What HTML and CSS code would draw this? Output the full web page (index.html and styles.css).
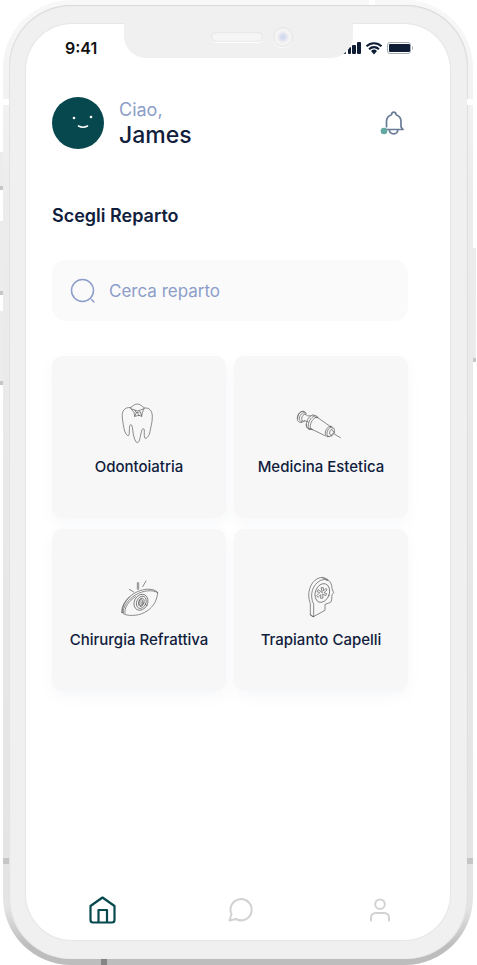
FILE: index.html
```html
<!DOCTYPE html>
<html lang="it">
<head>
<meta charset="utf-8">
<meta name="viewport" content="width=device-width, initial-scale=1">
<title>Scegli Reparto</title>
<link rel="stylesheet" href="styles.css">
</head>
<body>
<div class="phone">
  <span class="key key-mute"></span>
  <span class="key key-up"></span>
  <span class="key key-down"></span>
  <span class="key key-power"></span>
  <span class="band band-left-top"></span>
  <span class="band band-right-top"></span>
  <span class="band band-left-bottom"></span>
  <span class="band band-right-bottom"></span>
  <span class="band band-top"></span>
  <span class="band band-bottom"></span>
  <div class="bezel">
    <div class="screen">
      <div class="notch"><span class="speaker"></span><span class="camera"></span></div>
      <div class="status">
        <span class="time">9:41</span>
        <svg class="signals" viewBox="0 0 71 14" width="71" height="14" aria-hidden="true">
          <g fill="#0f1c36">
            <rect x="1" y="9" width="3" height="4" rx="1"/>
            <rect x="6" y="6" width="3" height="7" rx="1"/>
            <rect x="10" y="4" width="4" height="9" rx="1"/>
            <rect x="15" y="1" width="4" height="12" rx="1"/>
            <path d="M29 10l3 3.400 3-3.400a4.300 4.300 0 0 0-6 0z"/>
            <rect x="47" y="3" width="21" height="8" rx="1"/>
          </g>
          <path d="M24.500 5.300a10.800 10.800 0 0 1 15 0M27.100 8.200a7 7 0 0 1 9.800 0" fill="none" stroke="#0f1c36" stroke-width="2.200"/>
          <rect x="45.500" y="1.500" width="23" height="11" rx="2.500" fill="none" stroke="#a5abb5"/>
          <path d="M70 5v4q1-1 1-2t-1-2z" fill="#a5abb5"/>
        </svg>
      </div>

      <header class="profile">
        <svg class="avatar" viewBox="0 0 52 52" width="52" height="52" role="img" aria-label="James">
          <circle cx="26" cy="26" r="26" fill="#07484f"/>
          <circle cx="22" cy="21" r="1.300" fill="#fff"/>
          <circle cx="39" cy="20" r="1.300" fill="#fff"/>
          <path d="M26.500 29q4.500 2.500 9 0" fill="none" stroke="#fff" stroke-width="1.600" stroke-linecap="round"/>
        </svg>
        <div class="greeting">
          <span class="hello">Ciao,</span>
          <span class="name">James</span>
        </div>
        <button class="bell" type="button" aria-label="Notifiche">
          <svg viewBox="0 0 24 24" width="24" height="24" fill="none" stroke="#6a7b98" stroke-width="1.700" stroke-linejoin="round">
            <path d="M6 18.500h17l-2-2.500V10.500c0-3.300-2-5.800-4.900-6.800-.2-1.500-1.100-2.500-2.300-2.500s-2.100 1-2.300 2.500C8.500 4.700 6.500 7.200 6.500 10.500v6M9.300 18.500c.2 3 2 4.300 4.300 4.300s4.100-1.300 4.300-4.300"/>
            <circle cx="4" cy="20" r="3.300" fill="#63a9a2" stroke="none"/>
          </svg>
        </button>
      </header>

      <main class="content">
        <h1 class="title">Scegli Reparto</h1>
        <label class="search">
          <svg viewBox="0 0 26 26" width="26" height="26" fill="none" stroke="#8c9ec9" stroke-width="1.500" stroke-linecap="round" aria-hidden="true">
            <circle cx="12.500" cy="12.500" r="11"/>
            <path d="M21.500 21.500l2.500 2.500"/>
          </svg>
          <input type="text" placeholder="Cerca reparto" aria-label="Cerca reparto">
        </label>

        <div class="departments">
          <button class="card" type="button">
            <svg class="art" viewBox="27 36 180 132" aria-hidden="true">
              <path d="M91 53C74 50 64 64 67 84C69 97 70 110 74 123C77 132 81 137 85 137C91 136 85 105 92 104C99 104 97 126 102 141C105 151 108 158 112 158C117 158 119 149 121 139C124 128 125 116 130 116C136 116 130 138 135 145C142 145 148 136 150 125C151 115 157 100 157 80C157 62 148 52 133 54"/>
              <path d="M91 53C98 49 103 42 112 42C121 42 126 49 133 54M93 56L104 60Q112 66 121 60L132 56L127 68L125 79L117 76L104 79L102 68ZM104 79L109 68L121 65L125 79M104 60L109 68M117 76L113 69"/>
            </svg>
            <span class="label">Odontoiatria</span>
          </button>
          <button class="card" type="button">
            <svg class="art" viewBox="33 21 180 132" aria-hidden="true">
              <path d="M71 49c-9-1-18 8-19 20-1 9 5 15 12 13M66 49c-8 1-14 11-13 21M71 49q7 1 8 7M64 82q6 0 10-5"/>
              <path d="M74 53c-7-1-15 7-16 16-1 6 2 11 7 10M76 57c-6 0-11 7-11 15q0 4 3 6M75 58q7 7 17 5M71 78q6-2 14 3"/>
              <path d="M99 60c-10 1-19 14-20 28-1 9 4 16 11 15M106 63c-10 0-20 13-21 27-1 7 2 12 7 13M112 66c-9 0-19 12-21 25-1 7 1 11 5 13M99 60q9-1 16 8M79 88q-1 11 9 14"/>
              <path d="M113 68l39 27M94 102l43 21M106 67l6 1M90 102l7 2"/>
              <path d="M151 94c-8 1-15 10-15 20 0 6 3 10 7 11M155 96c-8 1-14 10-14 19 0 5 2 9 6 10M151 94q9 1 12 8v12l-8 9-12 2M158 101c-6 1-10 8-9 15q1 6 6 6M155 105l8 7-8 7"/>
              <path d="M163 117l18 11"/>
            </svg>
            <span class="label">Medicina Estetica</span>
          </button>
          <button class="card" type="button">
            <svg class="art" viewBox="27 15 180 132" aria-hidden="true">
              <path d="M66 127c-3-19 12-41 35-56 24-15 57-19 72-4-1 15-6 31-18 44-17 19-42 27-67 25-13-1-20-5-22-9z"/>
              <path d="M70 128c-3-16 14-39 36-53 24-14 51-17 67-7M75 130c-3-17 11-36 31-50M66 127q1-25 23-47"/>
              <ellipse cx="123" cy="97" rx="20" ry="25" transform="rotate(28 123 97)"/>
              <ellipse cx="124" cy="97" rx="14" ry="19" transform="rotate(24 124 97)"/>
              <ellipse cx="124" cy="97" rx="8" ry="13" transform="rotate(18 124 97)"/>
              <path d="M119 90q6-5 9 1l-1 13-6 3-3-4zM123 92v11M88 58l13 8M112 38v20M116 38v20M138 33l-10 17"/>
            </svg>
            <span class="label">Chirurgia Refrattiva</span>
          </button>
          <button class="card" type="button">
            <svg class="art" viewBox="3 30 180 132" aria-hidden="true">
              <path d="M61 149V115C49 87 60 51 84 40q12-6 23 0c14 6 19 19 19 31l5 12-5 6-1 16q-1 8-8 9l-12 4v18L70 155z"/>
              <path d="M71 155v-37C57 89 68 58 92 46q11-6 22 0M61 149l10 6M97 38l16 8"/>
              <ellipse cx="97" cy="84" rx="21" ry="29" transform="rotate(20 97 84)"/>
              <path d="M97 82l-4-14h7v10l8-8 3 5-9 8 8 3-3 6-9-5 1 12-7 1v-11l-8 8-4-5 9-9-8-3 3-5z"/>
            </svg>
            <span class="label">Trapianto Capelli</span>
          </button>
        </div>
      </main>

      <nav class="tabs" aria-label="Principale">
        <a class="tab active" href="#home" aria-label="Home">
          <svg viewBox="0 0 28 28" width="28" height="28" fill="none" stroke="currentColor" stroke-width="2.200" stroke-linejoin="round">
            <path d="M14.500 1.500L2.500 10V24q0 2.500 2.500 2.500h19q2.500 0 2.500-2.500V10zM10.500 26V14h8.500V26"/>
          </svg>
        </a>
        <a class="tab" href="#chat" aria-label="Messaggi">
          <svg viewBox="0 0 28 28" width="28" height="28" fill="none" stroke="currentColor" stroke-width="2" stroke-linejoin="round">
            <path d="M2.500 24.500l2-6.300A10.600 10.600 0 1 1 9 23z"/>
          </svg>
        </a>
        <a class="tab" href="#profile" aria-label="Profilo">
          <svg viewBox="0 0 28 28" width="28" height="28" fill="none" stroke="currentColor" stroke-width="2" stroke-linecap="round">
            <circle cx="14" cy="8.200" r="4.800"/>
            <path d="M5 24.500V22q0-5 5-5h8q5 0 5 5v2.500"/>
          </svg>
        </a>
      </nav>
    </div>
  </div>
</div>
</body>
</html>
```
FILE: styles.css
```css
* {
  box-sizing: border-box;
}

body {
  margin: 0;
  background: #fff;
  color: #10203c;
  font-family: Inter, "Liberation Sans", sans-serif;
}

button,
input {
  font: inherit;
  color: inherit;
  border: 0;
  padding: 0;
  background: none;
}

/* Device frame */
.phone {
  position: relative;
  display: flex;
  min-height: 100vh;
  margin: 0 4px 0 3px;
  padding: 5px 5px 6px 6px;
  border-radius: 68px;
  background: linear-gradient(#f8f8f8, #ececec 20%, #e4e4e4 94%, #bdbdbd 98%);
}

.bezel {
  flex: 1;
  display: flex;
  padding: 19px 18px 19px 17px;
  border-radius: 62px;
  background: #f0f0f0;
  box-shadow: inset 0 1px 1px #d8d8d8, inset 1px 0 1px #e4e4e4, inset -1px 0 1px #dedede;
}

.screen {
  position: relative;
  flex: 1;
  display: flex;
  flex-direction: column;
  min-width: 0;
  border-radius: 46px;
  background: #fff;
  box-shadow: 0 0 1px 1px #e6e6e6;
}

.key {
  position: absolute;
  left: -3px;
  width: 3px;
  background: #ececec;
  border-bottom: 4px solid #c6c6c6;
}

.key-mute { top: 152px; height: 38px; }
.key-up { top: 221px; height: 74px; }
.key-down { top: 311px; height: 74px; }
.key-power { top: 248px; left: auto; right: -3px; height: 114px; }

.band {
  position: absolute;
  width: 6px;
  height: 6px;
  background: #fff;
}

.band-left-top { top: 99px; left: 0; }
.band-right-top { top: 99px; right: 0; }
.band-left-bottom { bottom: 101px; left: 0; background: #c6c6c6; }
.band-right-bottom { bottom: 101px; right: 0; background: #c6c6c6; }
.band-top { top: 0; right: 98px; height: 5px; }
.band-bottom { bottom: 0; left: 98px; background: #858585; }

.notch {
  position: absolute;
  top: -2px;
  left: 98px;
  right: 97px;
  height: 36px;
  display: flex;
  align-items: flex-start;
  justify-content: center;
  gap: 10px;
  padding: 5px 0 0 27px;
  border-radius: 0 0 22px 22px;
  background: #f0f0f0;
}

.speaker {
  width: 52px;
  height: 10px;
  margin-top: 5px;
  border-radius: 5px;
  background: #f5f5f5;
  box-shadow: inset 0 0 2px #ccc, 0 1px 1px #fff;
}

.camera {
  width: 20px;
  height: 20px;
  border-radius: 50%;
  background: radial-gradient(circle, #d4daf0 2px, #e6e6ee 4px, #f4f4f4 6px);
  box-shadow: inset 0 0 2px #ccc, 0 1px 1px #fff;
}

/* Status bar */
.status {
  display: flex;
  align-items: center;
  justify-content: space-between;
  height: 48px;
  padding: 0 37px 0 39px;
}

.time {
  color: #111;
  font-size: 16px;
  font-weight: 600;
}

/* Greeting */
.profile {
  display: flex;
  align-items: center;
  gap: 15px;
  padding: 25px 46px 0 26px;
}

.greeting {
  display: flex;
  flex: 1;
  flex-direction: column;
}

.hello {
  color: #8c9ec9;
  font-size: 18px;
  line-height: 24px;
}

.name {
  font-size: 23px;
  font-weight: 500;
  line-height: 26px;
}

.bell {
  height: 24px;
}

.bell svg,
.tab svg {
  display: block;
}

/* Department picker */
.content {
  flex: 1;
  padding: 54px 42px 0 26px;
}

.title {
  margin: 0 0 31px;
  font-size: 18px;
  font-weight: 600;
  line-height: 26px;
}

.search {
  display: flex;
  align-items: center;
  gap: 13px;
  height: 61px;
  padding: 0 18px;
  border-radius: 14px;
  background: #fafafa;
}

.search input {
  flex: 1;
  min-width: 0;
  font-size: 17px;
  outline-color: #8c9ec9;
}

.search input::placeholder {
  color: #8c9ec9;
  opacity: 1;
}

.departments {
  display: grid;
  grid-template-columns: 1fr 1fr;
  gap: 11px 8px;
  margin-top: 35px;
}

.card {
  display: flex;
  flex-direction: column;
  align-items: center;
  gap: 11px;
  height: 162px;
  padding-top: 46px;
  border-radius: 10px;
  background: #f7f7f7;
  box-shadow: 0 6px 14px rgba(100, 110, 160, 0.05);
}

.art {
  width: 60px;
  height: 44px;
  fill: none;
  stroke: #555;
  stroke-width: 2;
  stroke-linejoin: round;
  stroke-linecap: round;
}

.label {
  font-size: 15px;
  font-weight: 500;
  line-height: 20px;
  white-space: nowrap;
}

/* Tab bar */
.tabs {
  display: grid;
  grid-template-columns: 1fr 1fr 1fr;
  padding: 0 1px 16px 6px;
}

.tab {
  justify-self: center;
  color: #d2d2d2;
}

.tab.active {
  color: #07484f;
}
```
